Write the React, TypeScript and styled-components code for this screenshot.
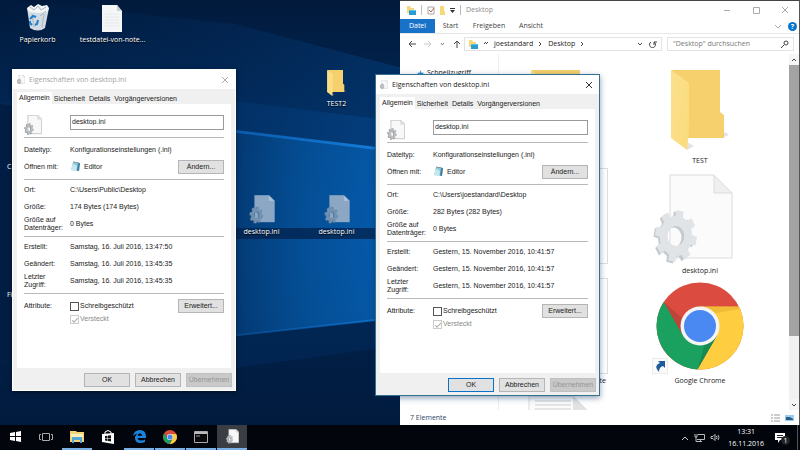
import React, { useId } from "react";
import styled, { createGlobalStyle, css } from "styled-components";

const segoe = `"Open Sans", "Noto Sans", sans-serif`;
const arial = `"Liberation Sans", Arial, sans-serif`;

const GlobalStyle = createGlobalStyle`
  * { box-sizing: border-box; }
  body { margin: 0; font-family: ${segoe}; font-size: 7px; line-height: 10px; color: #222; }
  button, input { font: inherit; color: inherit; }
  svg { display: block; flex: none; }
`;

/* ---------- drawings ---------- */

function gearPath(cx: number, cy: number, rx: number, ry: number, teeth = 8) {
  const pts: string[] = [];
  const step = (Math.PI * 2) / teeth;
  const add = (a: number, k: number) =>
    pts.push(`${(cx + Math.cos(a) * rx * k).toFixed(2)} ${(cy + Math.sin(a) * ry * k).toFixed(2)}`);
  for (let i = 0; i < teeth; i++) {
    const a = i * step + 0.2;
    add(a - step * 0.3, 0.78);
    add(a - step * 0.22, 1);
    add(a + step * 0.22, 1);
    add(a + step * 0.3, 0.78);
  }
  const hx = rx * 0.4;
  const hy = ry * 0.38;
  return (
    `M${pts.join("L")}Z` +
    `M${cx - hx} ${cy}a${hx} ${hy} 0 1 0 ${hx * 2} 0a${hx} ${hy} 0 1 0 ${-hx * 2} 0Z`
  );
}

type IniLook = "light" | "ghost" | "strong";
const iniColors: Record<IniLook, { page: string; edge: string; side: string; gear: string; fold: string }> = {
  light: { page: "#fbfbfc", edge: "#dcdcde", side: "#c6cace", gear: "#e1e4e7", fold: "#eeeff0" },
  strong: { page: "#f8f8f8", edge: "#b0b0b0", side: "#85898e", gear: "#b9bdc0", fold: "#e2e2e2" },
  ghost: { page: "#8ba7c4", edge: "#8ba7c4", side: "#4a6f95", gear: "#7291b1", fold: "#aec2d6" },
};

function IniIcon({ width, height, look = "light" }: { width: number; height: number; look?: IniLook }) {
  const c = iniColors[look];
  return (
    <svg width={width} height={height} viewBox="0 0 80 90" aria-hidden="true">
      <path d="M17 1H61L79 19V84H17Z" fill={c.page} stroke={c.edge} strokeWidth={look === "strong" ? 3 : 1} />
      <path d="M61 1V19H79Z" fill={c.fold} stroke={c.edge} strokeWidth="1" />
      <path d={gearPath(20.5, 63.5, 20, 26)} fill={c.side} fillRule="evenodd" />
      <path d={gearPath(23, 62, 21, 26)} fill={c.gear} fillRule="evenodd" />
    </svg>
  );
}

function FolderIcon({ width, height }: { width: number; height: number }) {
  const id = useId();
  return (
    <svg width={width} height={height} viewBox="0 0 58 80" aria-hidden="true">
      <defs>
        <linearGradient id={id} x1="0" y1="0" x2="1" y2="1">
          <stop offset="0" stopColor="#fbe08c" />
          <stop offset="1" stopColor="#fadb7d" />
        </linearGradient>
      </defs>
      <path d="M50 68L58 65L54 62ZM16 80L23 76L16 72Z" fill="#b8b8b8" opacity=".4" />
      <path d="M0 0H49V42L53 45V68H15V14Z" fill="#f5d06c" />
      <path d="M0 0L18 13V60L16 80L0 68Z" fill={`url(#${id})`} />
    </svg>
  );
}

function ChromeLogo({ size }: { size: number }) {
  return (
    <svg width={size} height={size} viewBox="-44 -44 88 88" aria-hidden="true">
      <circle r="43.5" fill="#db4b3f" />
      <path d="M0 -19.5H38.9A43.5 43.5 0 0 1 -2.6 43.4L16.9 9.75L0 0Z" fill="#ffcd40" />
      <path d="M-2.6 43.4A43.5 43.5 0 0 1 -36.3 -23.9L-16.9 9.75L0 0L16.9 9.75Z" fill="#1aa15f" />
      <path d="M0 -19.5H38.9L39.6 -17L16 -13Z" fill="#d9a02b" opacity=".4" />
      <path d="M-36.3 -23.9L-16.9 9.75L-18 -8Z" fill="#8a3a30" opacity=".35" />
      <path d="M-2.6 43.4L16.9 9.75L5 18Z" fill="#0d6b3c" opacity=".4" />
      <circle r="19.5" fill="#f4f4f4" />
      <circle r="16" fill="#4a88f2" />
    </svg>
  );
}

function RecycleBin() {
  return (
    <svg width="26" height="28" viewBox="0 0 26 28" aria-hidden="true">
      <path d="M2 4L5 24Q13 29 20 24L24 4Z" fill="#d3dbe2" />
      <path d="M2 4L6 1L9 3L13 0L17 2L22 1L24 4L22 8L13 9L4 8Z" fill="#f2f4f6" />
      <path d="M5 3L9 6L13 2L16 6L21 3M7 10L9 23M19 10L17 23M21 7L15 12" fill="none" stroke="#aab6c1" strokeWidth="1" />
      <g fill="none" stroke="#1d7fd0" strokeWidth="2">
        <path d="M5 15L8 12L11 13" />
        <path d="M13 16L12 20L10 21" />
        <path d="M7 21L5 19L5 17" />
      </g>
    </svg>
  );
}

function PageIcon() {
  return (
    <svg width="21" height="27" viewBox="0 0 21 27" aria-hidden="true">
      <path d="M0 0H15L20 6V27H0Z" fill="#f5f6f7" />
      <path d="M15 0V6H20Z" fill="#c9ced3" />
      <path d="M3 9H17M3 12H17M3 15H17M3 18H17M3 21H17" stroke="#e6e8ea" strokeWidth="1" />
    </svg>
  );
}

function TextFileIcon() {
  return (
    <svg width="64" height="84" viewBox="0 0 64 84" aria-hidden="true">
      <path d="M1 0H45L63 18V84H1Z" fill="#fbfbfb" stroke="#dadada" />
      <path d="M45 0V14H59Z" fill="#e2e2e2" />
      <path d="M7 5H43M7 9H43M7 13H43M7 22H56M7 26H56" stroke="#cfcfcf" strokeWidth="1" />
    </svg>
  );
}

function EditorIcon() {
  return (
    <svg width="11" height="11" viewBox="0 0 11 11" aria-hidden="true">
      <path d="M3 1L10 2L9 10L1 9Z" fill="#8fcbd8" />
      <path d="M8 2L10 2L9 10L7 9.500Z" fill="#3f7fa5" />
      <path d="M1 9L3 3L7 5L6 10Z" fill="#c7e8ee" />
      <path d="M3 1L9 2" stroke="#7f95a0" strokeWidth="1" />
    </svg>
  );
}

function UserFolder() {
  return (
    <svg width="10" height="9" viewBox="0 0 10 9" aria-hidden="true">
      <path d="M1 0H4L5 2H8V7H1Z" fill="#f8d775" />
      <path d="M3 4H10V9H3Z" fill="#2b9bd3" />
      <path d="M3 4H10V5H3Z" fill="#58c0ea" />
    </svg>
  );
}

type StrokeProps = { d: string; w?: number; h?: number; color?: string; thick?: number };
const Line = ({ d, w = 8, h = 8, color = "#444", thick = 1 }: StrokeProps) => (
  <svg width={w} height={h} viewBox={`0 0 ${w} ${h}`} fill="none" stroke={color} strokeWidth={thick} aria-hidden="true">
    <path d={d} />
  </svg>
);

function Wallpaper() {
  return (
    <WallpaperSvg viewBox="0 0 800 425" preserveAspectRatio="none" aria-hidden="true">
      <defs>
        <linearGradient id="sky" x1="0" y1="0" x2="0" y2="1">
          <stop offset="0" stopColor="#011a3c" />
          <stop offset=".3" stopColor="#022857" />
          <stop offset="1" stopColor="#011b3e" />
        </linearGradient>
        <linearGradient id="upper" x1="0" y1="0" x2="1" y2="0">
          <stop offset="0" stopColor="#023570" stopOpacity="0" />
          <stop offset=".5" stopColor="#03356e" stopOpacity=".6" />
          <stop offset="1" stopColor="#04488e" />
        </linearGradient>
        <linearGradient id="beam" x1="0" y1="0" x2="1" y2="0">
          <stop offset="0" stopColor="#021d43" />
          <stop offset=".5" stopColor="#033064" />
          <stop offset=".75" stopColor="#04498c" />
          <stop offset="1" stopColor="#0556a6" />
        </linearGradient>
        <linearGradient id="ray" x1="0" y1="0" x2="1" y2="0">
          <stop offset="0" stopColor="#0a62bd" stopOpacity=".1" />
          <stop offset=".6" stopColor="#0b5cae" />
          <stop offset="1" stopColor="#1484e2" />
        </linearGradient>
        <radialGradient id="glow" cx="400" cy="235" r="190" gradientUnits="userSpaceOnUse">
          <stop offset="0" stopColor="#0668c0" stopOpacity=".35" />
          <stop offset="1" stopColor="#0668c0" stopOpacity="0" />
        </radialGradient>
      </defs>
      <rect width="800" height="425" fill="url(#sky)" />
      <path d="M0 0L235 24L402 68V160L0 100Z" fill="url(#upper)" opacity=".4" />
      <path d="M0 70L235 101L402 122V160L0 110Z" fill="url(#upper)" opacity=".6" />
      <path d="M0 103L402 152V318L0 362Z" fill="url(#beam)" />
      <path d="M0 103L402 152V318L0 362Z" fill="url(#glow)" />
      <path d="M0 102L402 150V153L0 104Z" fill="url(#ray)" />
      <path d="M0 361L402 316V318L0 362Z" fill="url(#ray)" opacity=".6" />
      <rect x="236" y="228" width="165" height="11" fill="#03224c" opacity=".75" />
      <path d="M236 335L402 318V345L236 368Z" fill="#04336a" opacity=".35" />
    </WallpaperSvg>
  );
}

/* ---------- desktop ---------- */

const WallpaperSvg = styled.svg`
  position: absolute;
  inset: 0;
  width: 100%;
  height: 100%;
`;

const Screen = styled.div`
  display: flex;
  flex-direction: column;
  height: 100vh;
  overflow: hidden;
`;

const Desktop = styled.main`
  position: relative;
  flex: 1;
  min-height: 0;
  overflow: hidden;
  background: #011b3e;
`;

const Shortcut = styled.figure<{ $x: number; $y: number }>`
  position: absolute;
  left: ${(p) => p.$x}px;
  top: ${(p) => p.$y}px;
  width: 75px;
  margin: 0;
  display: flex;
  flex-direction: column;
  align-items: center;
  gap: 3px;
  color: #fff;
  figcaption { white-space: nowrap; text-shadow: 0 1px 1px #000; }
`;

const CoveredLabel = styled.span<{ $y: number }>`
  position: absolute;
  left: 7px;
  top: ${(p) => p.$y}px;
  color: #fff;
`;

/* ---------- explorer ---------- */

const Explorer = styled.section`
  position: absolute;
  inset: 0 0 0 50%;
  display: flex;
  flex-direction: column;
  background: #fff;
  border-right: 1px solid #555;
  border-top: 1px solid #444;
`;

const Bar = styled.div<{ $h: number; $gap?: number }>`
  display: flex;
  align-items: center;
  flex: none;
  height: ${(p) => p.$h}px;
  gap: ${(p) => p.$gap ?? 0}px;
`;

const TitleBar = styled(Bar)`
  padding: 0 10px 0 6px;
  color: #8c8c8c;
`;

const Spacer = styled.span`
  flex: 1;
`;

const Ghost = styled.button`
  display: flex;
  align-items: center;
  justify-content: center;
  flex: none;
  padding: 0;
  border: 0;
  background: none;
`;

const WindowButtons = styled.div`
  display: flex;
  gap: 21px;
`;

const Divider = styled.span`
  width: 1px;
  height: 10px;
  background: #bbb;
`;

const Ribbon = styled(Bar)`
  border-bottom: 1px solid #e8e8e8;
  padding-right: 2px;
  color: #444;
`;

const RibbonTab = styled.button<{ $active?: boolean; $w: number }>`
  width: ${(p) => p.$w}px;
  height: 14px;
  padding: 0;
  border: 0;
  background: ${(p) => (p.$active ? "#1873c8" : "none")};
  color: ${(p) => (p.$active ? "#fff" : "#444")};
`;

const Help = styled.button`
  width: 9px;
  height: 9px;
  margin-left: 6px;
  padding: 0;
  border: 0;
  border-radius: 50%;
  background: #0a74c9;
  color: #fff;
  line-height: 9px;
  font-weight: 700;
`;

const NavBar = styled(Bar)`
  padding: 0 5px 0 8px;
`;

const Field = styled.div`
  display: flex;
  align-items: center;
  height: 14px;
  border: 1px solid #e3e3e3;
`;

const Address = styled(Field)`
  flex: 1;
  min-width: 0;
  gap: 6px;
  margin-left: 3px;
  padding: 0 4px 0 3px;
`;

const Crumb = styled.a`
  color: #222;
  text-decoration: none;
`;

const Search = styled(Field)`
  width: 127px;
  margin-left: 5px;
  padding: 0 4px 0 5px;
  input {
    flex: 1;
    min-width: 0;
    padding: 0;
    border: 0;
    outline: 0;
    background: none;
  }
  input::placeholder { color: #777; opacity: 1; }
`;

const Content = styled.div`
  display: flex;
  flex: 1;
  min-height: 0;
`;

const Tree = styled.nav`
  width: 99px;
  padding: 14px 0 0 17px;
  border-right: 1px solid #eee;
  a { display: flex; align-items: center; gap: 3px; color: #222; text-decoration: none; }
`;

const Files = styled.div`
  flex: 1;
  min-width: 0;
  display: grid;
  grid-template-columns: 122px 122px;
  grid-auto-rows: 110px;
  column-gap: 18px;
  padding-top: 4px;
  overflow: hidden;
`;

const File = styled.figure`
  position: relative;
  margin: 0;
  display: flex;
  flex-direction: column;
  align-items: center;
`;

const Thumb = styled.div<{ $framed?: boolean; $start?: boolean; $lift?: boolean }>`
  display: flex;
  align-items: flex-end;
  justify-content: ${(p) => (p.$start ? "flex-start" : "center")};
  width: 95px;
  height: 96px;
  padding-bottom: ${(p) => (p.$lift ? 4 : 0)}px;
  ${(p) => p.$framed && css`border: 1px solid #ddd;`}
`;

const FileName = styled.figcaption<{ $end?: boolean }>`
  width: 92px;
  line-height: 14px;
  text-align: ${(p) => (p.$end ? "right" : "center")};
`;

const ShortcutArrow = styled.span`
  position: absolute;
  left: 13px;
  top: 80px;
  padding: 1px;
  background: #fafafa;
  border: 1px solid #ececec;
`;

const Scrollbar = styled.div`
  display: flex;
  flex-direction: column;
  width: 10px;
  background: #f0f0f0;
`;

const Thumbstick = styled.div`
  flex: 0 0 76%;
  margin-bottom: auto;
  background: #a3a3a3;
`;

const ScrollButton = styled(Ghost)`
  height: 11px;
  background: #f5f5f5;
`;

const StatusBar = styled(Bar)`
  padding: 0 5px 0 10px;
  color: #2d4668;
`;

/* ---------- property dialogs ---------- */

const Dialog = styled.section<{ $x: number; $y: number; $active: boolean }>`
  position: absolute;
  left: ${(p) => p.$x}px;
  top: ${(p) => p.$y}px;
  width: ${(p) => (p.$active ? 225 : 224)}px;
  border: 1px solid ${(p) => (p.$active ? "#35708e" : "#fff")};
  background: #f0f0f0;
  box-shadow: ${(p) => (p.$active ? "0 2px 6px rgba(0,40,90,.45)" : "0 1px 4px rgba(0,0,0,.5)")};
  font-family: ${arial};
`;

const DialogTitle = styled.header<{ $active: boolean }>`
  display: flex;
  align-items: center;
  gap: 4px;
  height: 19px;
  padding: 0 6px 0 4px;
  background: #fff;
  font-family: ${segoe};
  color: ${(p) => (p.$active ? "#222" : "#a2a2a2")};
`;

const Tabs = styled.div`
  display: flex;
  align-items: flex-end;
  height: 15px;
  padding: 0 4px;
`;

const Tab = styled.button<{ $active?: boolean }>`
  height: ${(p) => (p.$active ? 12 : 10)}px;
  padding: 0 2px;
  border: 0;
  background: ${(p) => (p.$active ? "#fff" : "none")};
  line-height: 10px;
  white-space: nowrap;
`;

const Sheet = styled.div`
  margin: 0 4px;
  padding: 11px 7px 43px;
  background: #fff;
`;

const Group = styled.div<{ $roomy?: boolean }>`
  display: grid;
  grid-template-columns: 46px 1fr auto;
  align-items: center;
  grid-auto-rows: 17px;
  padding: ${(p) => (p.$roomy ? "3px 0 4px" : "1px 0 4px")};
  border-top: 1px solid #b9b9b9;
`;

const NameRow = styled.div`
  display: grid;
  grid-template-columns: 46px 1fr;
  align-items: start;
  height: 22px;
`;

const NameInput = styled.input`
  width: 100%;
  height: 15px;
  padding: 0 1px 2px;
  border: 1px solid #9a9a9a;
  border-radius: 0;
  outline: 0;
  background: #fff;
`;

const Label = styled.span<{ $tight?: boolean }>`
  line-height: ${(p) => (p.$tight ? 8 : 10)}px;
`;

const Value = styled.span<{ $wide?: boolean }>`
  display: flex;
  align-items: center;
  gap: 3px;
  white-space: nowrap;
  ${(p) => p.$wide && css`grid-column: 2 / 4;`}
`;

const Push = styled.button<{ $primary?: boolean }>`
  width: 46px;
  height: 14px;
  padding: 0;
  border: ${(p) => (p.$primary ? "1px solid #0b73c7" : "1px solid #b5b5b5")};
  background: #e1e1e1;
  line-height: 10px;
  &:disabled { background: #c9c9c9; border-color: #c0c0c0; color: #969696; }
`;

const Check = styled.label<{ $off?: boolean }>`
  display: flex;
  align-items: center;
  gap: 1px;
  color: ${(p) => (p.$off ? "#8a8a8a" : "#222")};
  input {
    appearance: none;
    display: grid;
    place-items: center;
    width: 9px;
    height: 9px;
    margin: 0;
    border: 1px solid ${(p) => (p.$off ? "#ccc" : "#555")};
    background: #fff;
  }
  input:checked::after {
    content: "";
    width: 5px;
    height: 2px;
    border: solid #aaa;
    border-width: 0 0 1px 1px;
    transform: rotate(-45deg);
  }
`;

const Attributes = styled(Group)`
  grid-auto-rows: 12px;
  padding: 6px 0 0;
  row-gap: 1px;
`;

const Actions = styled.footer`
  display: flex;
  justify-content: flex-end;
  gap: 5px;
  padding: 5px 3px 3px;
`;

interface PropertiesProps {
  x: number;
  y: number;
  active?: boolean;
  path: string;
  size: string;
  created: string;
  changed: string;
  accessed: string;
}

function Properties({ x, y, active = false, path, size, created, changed, accessed }: PropertiesProps) {
  const id = useId();
  return (
    <Dialog $x={x} $y={y} $active={active} role="dialog" aria-labelledby={id}>
      <DialogTitle $active={active}>
        <IniIcon width={8} height={9} look="strong" />
        <span id={id}>Eigenschaften von desktop.ini</span>
        <Spacer />
        <Ghost aria-label="Schließen">
          <Line d="M1 1L7 7M7 1L1 7" color={active ? "#333" : "#aaa"} />
        </Ghost>
      </DialogTitle>
      <Tabs role="tablist">
        <Tab $active role="tab">Allgemein</Tab>
        <Tab role="tab">Sicherheit</Tab>
        <Tab role="tab">Details</Tab>
        <Tab role="tab">Vorgängerversionen</Tab>
      </Tabs>
      <Sheet>
        <NameRow>
          <IniIcon width={18} height={20} look="strong" />
          <NameInput aria-label="Dateiname" defaultValue="desktop.ini" />
        </NameRow>
        <Group $roomy>
          <Label>Dateityp:</Label>
          <Value $wide>Konfigurationseinstellungen (.ini)</Value>
          <Label>Öffnen mit:</Label>
          <Value><EditorIcon />Editor</Value>
          <Push>Ändern...</Push>
        </Group>
        <Group>
          <Label>Ort:</Label>
          <Value $wide>{path}</Value>
          <Label>Größe:</Label>
          <Value $wide>{size}</Value>
          <Label $tight>Größe auf Datenträger:</Label>
          <Value $wide>0 Bytes</Value>
        </Group>
        <Group>
          <Label>Erstellt:</Label>
          <Value $wide>{created}</Value>
          <Label>Geändert:</Label>
          <Value $wide>{changed}</Value>
          <Label $tight>Letzter<br />Zugriff:</Label>
          <Value $wide>{accessed}</Value>
        </Group>
        <Attributes>
          <Label>Attribute:</Label>
          <Check><input type="checkbox" />Schreibgeschützt</Check>
          <Push>Erweitert...</Push>
          <span />
          <Check $off><input type="checkbox" defaultChecked disabled />Versteckt</Check>
        </Attributes>
      </Sheet>
      <Actions>
        <Push $primary={active}>OK</Push>
        <Push>Abbrechen</Push>
        <Push disabled>Übernehmen</Push>
      </Actions>
    </Dialog>
  );
}

/* ---------- taskbar ---------- */

const Taskbar = styled.footer`
  display: flex;
  align-items: stretch;
  flex: none;
  height: 25px;
  background: #02050c;
  color: #fff;
`;

const TaskButton = styled.button<{ $open?: boolean; $active?: boolean }>`
  display: flex;
  align-items: center;
  justify-content: center;
  width: 30px;
  margin-right: 1px;
  padding: 0;
  border: 0;
  border-bottom: 2px solid ${(p) => (p.$open ? "#76b0e4" : "transparent")};
  background: ${(p) => (p.$active ? "#3a3d42" : "none")};
`;

const Tray = styled.div`
  display: flex;
  align-items: center;
  gap: 5px;
  margin-left: auto;
  padding-right: 11px;
`;

const Clock = styled.time`
  margin: 0 6px 0 3px;
  line-height: 12px;
  text-align: center;
`;

const Notice = styled(Ghost)`
  position: relative;
  svg + span {
    position: absolute;
    left: 6px;
    top: 3px;
    width: 9px;
    height: 9px;
    border-radius: 50%;
    background: #222;
    color: #fff;
    line-height: 9px;
    text-align: center;
  }
`;

const ShowDesktop = styled.button`
  width: 3px;
  padding: 0;
  border: 0;
  border-left: 1px solid #555;
  background: none;
`;

export default function App() {
  return (
    <Screen>
      <GlobalStyle />
      <Desktop>
        <Wallpaper />
        <Shortcut $x={0} $y={4}><RecycleBin /><figcaption>Papierkorb</figcaption></Shortcut>
        <Shortcut $x={75} $y={5}><PageIcon /><figcaption>testdatei-von-note...</figcaption></Shortcut>
        <Shortcut $x={299} $y={70}><FolderIcon width={19} height={26} /><figcaption>TEST2</figcaption></Shortcut>
        <Shortcut $x={224} $y={195}><IniIcon width={26} height={29} look="ghost" /><figcaption>desktop.ini</figcaption></Shortcut>
        <Shortcut $x={299} $y={195}><IniIcon width={26} height={29} look="ghost" /><figcaption>desktop.ini</figcaption></Shortcut>
        <CoveredLabel $y={162}>C</CoveredLabel>
        <CoveredLabel $y={290}>Fi</CoveredLabel>

        <Explorer>
          <TitleBar $h={18} $gap={5}>
            <UserFolder />
            <Divider />
            <Ghost aria-label="Eigenschaften">
              <svg width="8" height="9" viewBox="0 0 8 9" fill="none">
                <path d="M1 1H7V8H1Z" stroke="#a9a9a9" />
                <path d="M2 4L4 6L7 2" stroke="#b36a55" />
              </svg>
            </Ghost>
            <Ghost aria-label="Neuer Ordner">
              <svg width="5" height="9" viewBox="0 0 5 9"><path d="M0 0H4V5L5 6V9H0Z" fill="#f8d775" /></svg>
            </Ghost>
            <Ghost aria-label="Anpassen">
              <svg width="5" height="5" viewBox="0 0 5 5"><path d="M0 0H5V1H0ZM0 2H5L2.500 5Z" fill="#333" /></svg>
            </Ghost>
            <Divider />
            <span>Desktop</span>
            <Spacer />
            <WindowButtons>
              <Ghost aria-label="Minimieren"><Line d="M1 4.500H7" color="#aaa" /></Ghost>
              <Ghost aria-label="Maximieren"><Line d="M1.500 1.500H7.500V7.500H1.500Z" color="#aaa" /></Ghost>
              <Ghost aria-label="Schließen"><Line d="M1 1L7 7M7 1L1 7" color="#aaa" /></Ghost>
            </WindowButtons>
          </TitleBar>
          <Ribbon $h={15}>
            <RibbonTab $active $w={35}>Datei</RibbonTab>
            <RibbonTab $w={31}>Start</RibbonTab>
            <RibbonTab $w={46}>Freigeben</RibbonTab>
            <RibbonTab $w={38}>Ansicht</RibbonTab>
            <Spacer />
            <Ghost aria-label="Menüband erweitern"><Line d="M1 3L4 6L7 3" color="#aaa" /></Ghost>
            <Help aria-label="Hilfe">?</Help>
          </Ribbon>
          <NavBar $h={20}>
            <Bar $h={14} $gap={8}>
              <Ghost aria-label="Zurück"><Line d="M8 4H1M4 1L1 4L4 7" /></Ghost>
              <Ghost aria-label="Vorwärts"><Line d="M0 4H7M4 1L7 4L4 7" color="#ccc" /></Ghost>
              <Ghost aria-label="Verlauf"><Line w={5} d="M1 3L2.500 5L4 3" color="#888" /></Ghost>
              <Ghost aria-label="Nach oben"><Line d="M4 8V1M1 4L4 1L7 4" /></Ghost>
            </Bar>
            <Address>
              <UserFolder />
              <Line w={4} d="M2 2L0 4M4 2L2 4" />
              <Crumb href="#joestandard">joestandard</Crumb>
              <Line w={3} d="M0 2L2 4L0 6" />
              <Crumb href="#desktop">Desktop</Crumb>
              <Line w={3} d="M0 2L2 4L0 6" />
              <Spacer />
              <Ghost aria-label="Vorherige Orte"><Line w={6} d="M1 3L3 5L5 3" /></Ghost>
              <Ghost aria-label="Aktualisieren"><Line d="M5 2A3 3 0 1 1 2 2M5 5V2H8" /></Ghost>
            </Address>
            <Search>
              <input aria-label="Suchen" placeholder={'"Desktop" durchsuchen'} />
              <Line d="M3 5L0 8M3 3A2 2 0 1 1 5 5A2 2 0 0 1 3 3" />
            </Search>
          </NavBar>
          <Content>
            <Tree>
              <a href="#schnellzugriff">
                <svg width="7" height="7" viewBox="0 0 8 8"><path d="M4 0L5 3H8L6 5L7 8L4 6L1 8L2 5L0 3H3Z" fill="#2d8fd5" /></svg>
                Schnellzugriff
              </a>
            </Tree>
            <Files>
              <File><Thumb $lift><FolderIcon width={58} height={80} /></Thumb></File>
              <File><Thumb $lift><FolderIcon width={58} height={80} /></Thumb><FileName>TEST</FileName></File>
              <File><Thumb $framed /></File>
              <File><Thumb $start><IniIcon width={80} height={90} /></Thumb><FileName>desktop.ini</FileName></File>
              <File><Thumb $framed /><FileName $end>te</FileName></File>
              <File>
                <Thumb $lift><ChromeLogo size={88} /></Thumb>
                <ShortcutArrow>
                  <svg width="12" height="12" viewBox="0 0 12 12">
                    <path d="M4 1H11V8L9 6Q5 7 5 12Q-1 6 6 3Z" fill="#1e5a9c" />
                  </svg>
                </ShortcutArrow>
                <FileName>Google Chrome</FileName>
              </File>
              <File><Thumb $lift><TextFileIcon /></Thumb></File>
            </Files>
            <Scrollbar>
              <ScrollButton aria-label="Nach oben blättern"><Line d="M2 5L4 3L6 5" /></ScrollButton>
              <Thumbstick />
              <ScrollButton aria-label="Nach unten blättern"><Line d="M2 3L4 5L6 3" /></ScrollButton>
            </Scrollbar>
          </Content>
          <StatusBar $h={15} $gap={5}>
            <span>7 Elemente</span>
            <Spacer />
            <Ghost aria-label="Details"><Line w={9} d="M0 1H2M3 1H9M0 4H2M3 4H9M0 7H2M3 7H9" color="#999" /></Ghost>
            <Ghost aria-label="Große Symbole">
              <svg width="9" height="8" viewBox="0 0 9 8"><path d="M0 1H9V7H0Z" fill="#9bcdf0" /><path d="M1 3H5L8 5V6H1Z" fill="#2b5f86" /></svg>
            </Ghost>
          </StatusBar>
        </Explorer>

        <Properties
          x={12} y={69}
          path="C:\Users\Public\Desktop"
          size="174 Bytes (174 Bytes)"
          created="Samstag, 16. Juli 2016, 13:47:50"
          changed="Samstag, 16. Juli 2016, 13:45:35"
          accessed="Samstag, 16. Juli 2016, 13:45:35"
        />
        <Properties
          x={375} y={74} active
          path="C:\Users\joestandard\Desktop"
          size="282 Bytes (282 Bytes)"
          created="Gestern, 15. November 2016, 10:41:57"
          changed="Gestern, 15. November 2016, 10:41:57"
          accessed="Gestern, 15. November 2016, 10:41:57"
        />
      </Desktop>

      <Taskbar>
        <TaskButton aria-label="Start">
          <svg width="11" height="11" viewBox="0 0 11 11"><path d="M0 2L5 1V5H0ZM6 1L11 0V5H6ZM0 6H5V10L0 9ZM6 6H11V11L6 10Z" fill="#fff" /></svg>
        </TaskButton>
        <TaskButton aria-label="Taskansicht">
          <Line w={14} h={10} d="M3.500 1.500H10.500V8.500H3.500ZM2 2.500H.5V7.500H2M12 2.500H13.500V7.500H12" color="#aaa" />
        </TaskButton>
        <TaskButton $open aria-label="Explorer">
          <svg width="14" height="12" viewBox="0 0 14 12">
            <path d="M0 0H6L7 1H14V11H0Z" fill="#f3d578" />
            <path d="M1 3H13V6H1Z" fill="#fbeeb9" />
            <path d="M2 6H12V12H10V9H4V12H2Z" fill="#55a8d6" />
          </svg>
        </TaskButton>
        <TaskButton aria-label="Store">
          <svg width="14" height="14" viewBox="0 0 14 14">
            <path d="M1 4L13 3V14L1 12Z" fill="#fff" />
            <path d="M4 4V2Q7 -1 10 2V4" fill="none" stroke="#fff" />
            <path d="M4 6L6.500 5.700V8H4ZM7 5.600L10 5.200V8H7ZM4 8.500H6.500V11L4 10.600ZM7 8.500H10V11.500L7 11.100Z" fill="#111" />
          </svg>
        </TaskButton>
        <TaskButton $open aria-label="Edge">
          <svg width="13" height="13" viewBox="0 0 13 13">
            <path d="M0 6Q1 0 7 0Q13 0 13 7V8H4.500Q5 10.500 8 10.500Q10.500 10.500 12 9.500V12Q10 13 7.500 13Q2 13 2 8Q2 5 5 3.500Q2 3.500 0 6ZM4.500 5.800H9Q9 3.300 7 3.300Q5 3.300 4.500 5.800Z" fill="#1b83dc" fillRule="evenodd" />
          </svg>
        </TaskButton>
        <TaskButton $open aria-label="Google Chrome"><ChromeLogo size={14} /></TaskButton>
        <TaskButton $open aria-label="Eingabeaufforderung">
          <svg width="14" height="12" viewBox="0 0 14 12">
            <path d="M.5 .5H13.500V11.500H.5Z" fill="#0a0a0a" stroke="#aaa" />
            <path d="M1 1H13V3H1Z" fill="#bbb" />
            <path d="M2 5H6" stroke="#999" />
          </svg>
        </TaskButton>
        <TaskButton $open $active aria-label="desktop.ini">
          <IniIcon width={13} height={15} look="strong" />
        </TaskButton>
        <Tray>
          <Ghost aria-label="Ausgeblendete Symbole"><Line d="M1 6L4 3L7 6" color="#ccc" /></Ghost>
          <Ghost aria-label="Netzwerk"><Line w={11} h={9} d="M4 1.500H10.500V6.500H3M1 1V4H3V1M2 4V8.500H8M6.500 6.500V8" color="#bbb" /></Ghost>
          <Ghost aria-label="Lautstärke"><Line w={10} h={9} d="M1 3.500H3L5 1.500V7.500L3 5.500H1ZM6.500 3Q7.500 4.500 6.500 6M8 2Q10 4.500 8 7" color="#bbb" /></Ghost>
          <Clock dateTime="2016-11-16T13:31">13:31<br />16.11.2016</Clock>
          <Notice aria-label="Benachrichtigungen">
            <svg width="11" height="10" viewBox="0 0 11 10"><path d="M0 0H10V7H5L3 10V7H0Z" fill="#fff" /><path d="M2 2.500H8M2 4.500H8" stroke="#222" /></svg>
            <span>1</span>
          </Notice>
        </Tray>
        <ShowDesktop aria-label="Desktop anzeigen" />
      </Taskbar>
    </Screen>
  );
}
